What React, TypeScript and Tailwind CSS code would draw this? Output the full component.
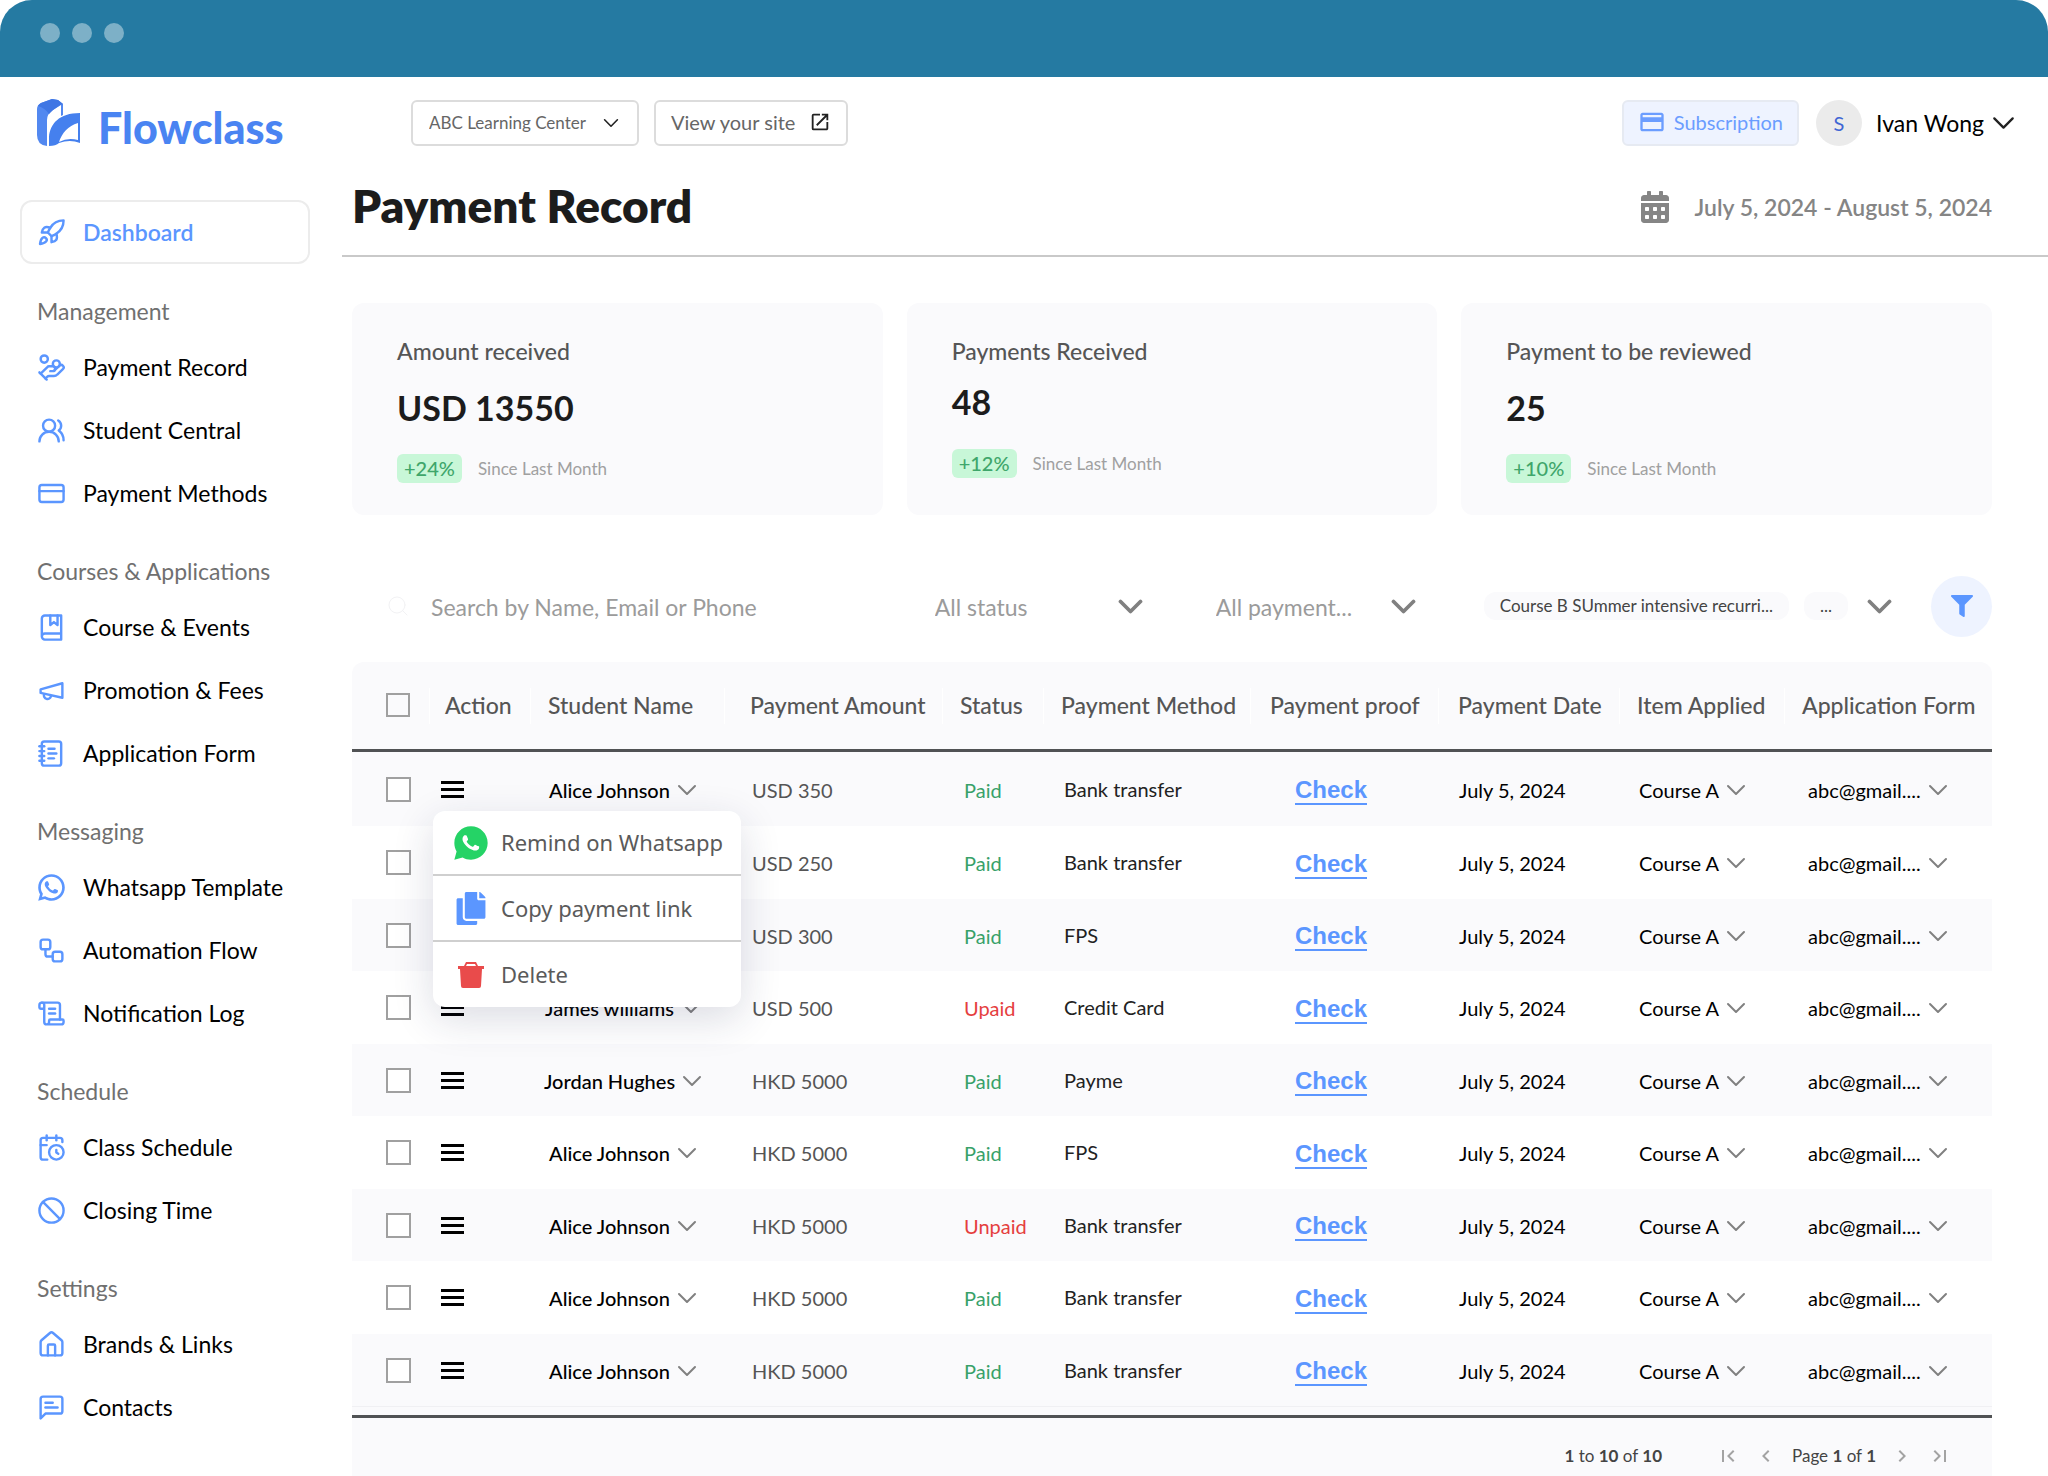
import React, { useState } from "react";
import {
  Ban,
  CalendarClock,
  CreditCard,
  HandCoins,
  House,
  NotebookText,
  Rocket,
  ScrollText,
  Search,
  UsersRound,
  Workflow,
} from "lucide-react";
import { FaCalendarAlt, FaCopy, FaFilter } from "react-icons/fa";
import { MdChevronLeft, MdChevronRight, MdCreditCard, MdFirstPage, MdLastPage, MdOpenInNew } from "react-icons/md";
import { RiWhatsappFill, RiWhatsappLine } from "react-icons/ri";

type IconType = React.ComponentType<{ className?: string }>;

const strokeProps = {
  viewBox: "0 0 24 24",
  fill: "none",
  stroke: "currentColor",
  strokeWidth: 2,
  strokeLinecap: "round" as const,
  strokeLinejoin: "round" as const,
};

const BookIcon: IconType = ({ className }) => (
  <svg {...strokeProps} className={className}>
    <path d="M11 2v8l3-2.5L17 10V2" />
    <path d="M4 19.5v-15A2.5 2.5 0 0 1 6.5 2H20v20H6.5a2.5 2.5 0 0 1 0-5H20" />
  </svg>
);

const MegaphoneIcon: IconType = ({ className }) => (
  <svg {...strokeProps} className={className}>
    <path d="m3 11 18-5v12L3 14v-3z" />
    <path d="M11.6 16.8a3 3 0 1 1-5.8-1.6" />
  </svg>
);

const MessageIcon: IconType = ({ className }) => (
  <svg {...strokeProps} className={className}>
    <path d="M21 15a2 2 0 0 1-2 2H7l-4 4V5a2 2 0 0 1 2-2h14a2 2 0 0 1 2 2z" />
    <path d="M13 8H7" />
    <path d="M17 12H7" />
  </svg>
);

const WhatsappIcon: IconType = ({ className }) => <RiWhatsappLine className={`scale-110 ${className}`} />;

const TrashIcon: IconType = ({ className }) => (
  <svg viewBox="0 0 26 26" className={className} fill="currentColor">
    <path
      fillRule="evenodd"
      d="M8 0h10l2 4h6v3h-2l-1 17a2 2 0 0 1-2 2H5a2 2 0 0 1-2-2L2 7H0V4h6zM9 2 8 4h10l-1-2z"
    />
  </svg>
);

const Chevron = ({ className, thickness = 2 }: { className?: string; thickness?: number }) => (
  <svg viewBox="-1 -1 20 12" className={className} fill="none" stroke="currentColor" strokeWidth={thickness}>
    <path d="m1 1 8 8 8-8" strokeLinecap="round" strokeLinejoin="round" />
  </svg>
);

const Logo = () => (
  <svg viewBox="0 0 43 47" className="h-[47px] w-[43px]" aria-hidden="true">
    <path fill="#5288f0" d="M0 10Q0 6 4 4L15 0l6 1 5 4v11l-2 1V6l-8 5q-6 4-6 10v26Q0 46 0 36z" />
    <path fill="#3f76e4" d="M1 7q1-2 3-3L15 0l6 1 5 4-3 1-7 5-4 4Q8 9 1 7z" />
    <path
      fill="#4580ee"
      fillRule="evenodd"
      d="M12 47V38C13 25 22 14 43 14v30q-10-4-21 0-3 3-10 3zM41 24C31 27 25 34 22 43q9-5 19-2z"
    />
  </svg>
);

const navSections: { title: string; items: { label: string; icon: IconType }[] }[] = [
  {
    title: "Management",
    items: [
      { label: "Payment Record", icon: HandCoins },
      { label: "Student Central", icon: UsersRound },
      { label: "Payment Methods", icon: CreditCard },
    ],
  },
  {
    title: "Courses & Applications",
    items: [
      { label: "Course & Events", icon: BookIcon },
      { label: "Promotion & Fees", icon: MegaphoneIcon },
      { label: "Application Form", icon: NotebookText },
    ],
  },
  {
    title: "Messaging",
    items: [
      { label: "Whatsapp Template", icon: WhatsappIcon },
      { label: "Automation Flow", icon: Workflow },
      { label: "Notification Log", icon: ScrollText },
    ],
  },
  {
    title: "Schedule",
    items: [
      { label: "Class Schedule", icon: CalendarClock },
      { label: "Closing Time", icon: Ban },
    ],
  },
  {
    title: "Settings",
    items: [
      { label: "Brands & Links", icon: House },
      { label: "Contacts", icon: MessageIcon },
    ],
  },
];

const stats = [
  { label: "Amount received", value: "USD 13550", change: "+24%", valueClass: "mb-[21px] leading-[50px]" },
  { label: "Payments Received", value: "48", change: "+12%", valueClass: "mb-7 leading-[38px]" },
  { label: "Payment to be reviewed", value: "25", change: "+10%", valueClass: "mb-[21px] leading-[50px]" },
];

const payments = [
  { name: "Alice Johnson", amount: "USD 350", status: "Paid", method: "Bank transfer" },
  { name: "Alice Johnson", amount: "USD 250", status: "Paid", method: "Bank transfer" },
  { name: "Alice Johnson", amount: "USD 300", status: "Paid", method: "FPS" },
  { name: "James williams", amount: "USD 500", status: "Upaid", method: "Credit Card" },
  { name: "Jordan Hughes", amount: "HKD 5000", status: "Paid", method: "Payme" },
  { name: "Alice Johnson", amount: "HKD 5000", status: "Paid", method: "FPS" },
  { name: "Alice Johnson", amount: "HKD 5000", status: "Unpaid", method: "Bank transfer" },
  { name: "Alice Johnson", amount: "HKD 5000", status: "Paid", method: "Bank transfer" },
  { name: "Alice Johnson", amount: "HKD 5000", status: "Paid", method: "Bank transfer" },
];

const columns = [
  { label: "Action", className: "w-[101px] pl-4" },
  { label: "Student Name", className: "w-[194px] pl-[18px]" },
  { label: "Payment Amount", className: "w-[218px] pl-[26px]" },
  { label: "Status", className: "w-[101px] pl-[18px]" },
  { label: "Payment Method", className: "w-[207px] pl-[18px]" },
  { label: "Payment proof", className: "w-[188px] pl-5" },
  { label: "Payment Date", className: "w-[181px] pl-5" },
  { label: "Item Applied", className: "w-[165px] pl-[18px]" },
  { label: "Application Form", className: "w-[208px] pl-[18px]" },
];

const Sidebar = () => (
  <aside className="w-[342px] shrink-0">
    <a href="#" className="flex items-start gap-[18px] pt-[22px] pl-[37px] text-[#4a84f2]">
      <Logo />
      <span className="pt-[5px] text-[43px] leading-[48px] font-black">Flowclass</span>
    </a>

    <nav className="pl-5">
      <a
        href="#"
        className="mt-12 flex h-16 w-[290px] items-center gap-[17px] rounded-xl border-2 border-[#ececec] pl-[15px] text-[23px] font-semibold text-[#5b96ff]"
      >
        <Rocket className="size-[29px]" />
        Dashboard
      </a>

      <div className="mt-[35px] flex flex-col gap-[34px] pl-[17px]">
        {navSections.map((section) => (
          <section key={section.title}>
            <h2 className="mb-[13px] text-[23px] leading-6 text-[#707070]">{section.title}</h2>
            {section.items.map(({ label, icon: Icon }) => (
              <a key={label} href="#" className="flex h-[63px] items-center gap-[17px] text-[23px] text-black">
                <Icon className="size-[29px] text-[#5b96ff]" />
                {label}
              </a>
            ))}
          </section>
        ))}
      </div>
    </nav>
  </aside>
);

const TopBar = () => (
  <header className="flex items-center pt-[23px] pr-[33px] pl-[69px]">
    <div className="relative">
      <select
        aria-label="School"
        className="h-[46px] w-[228px] appearance-none rounded-md border-2 border-[#dcdcdc] bg-white pl-4 text-[17px] text-[#666]"
      >
        <option>ABC Learning Center</option>
      </select>
      <Chevron className="pointer-events-none absolute top-[18px] right-5 h-[10px] w-4 text-[#222]" />
    </div>
    <a
      href="#"
      className="ml-[15px] flex h-[46px] w-[194px] items-center justify-between rounded-md border-2 border-[#dcdcdc] px-[15px] pb-[2px] text-xl text-[#666]"
    >
      View your site
      <MdOpenInNew className="size-[22px] text-[#222]" />
    </a>

    <button className="ml-auto flex h-[46px] items-center gap-2 rounded-md border-2 border-[#e6eaf2] bg-[#eef3ff] px-[14px] pb-[2px] text-xl text-[#6b9dff]">
      <MdCreditCard className="size-7" />
      Subscription
    </button>
    <button className="ml-[17px] flex items-center text-[23px] text-black">
      <span className="mr-[14px] flex size-[46px] items-center justify-center rounded-full bg-[#ebebeb] text-xl text-[#3f66d4]">
        S
      </span>
      Ivan Wong
      <Chevron className="ml-2 h-[14px] w-[23px] text-[#222]" />
    </button>
  </header>
);

const Stats = () => (
  <div className="mt-[46px] grid grid-cols-3 gap-6">
    {stats.map((stat) => (
      <div key={stat.label} className="h-[212px] rounded-xl bg-[#fafafc] px-[45px] pt-[34px]">
        <p className="text-[23px] leading-7 font-medium text-[#555]">{stat.label}</p>
        <p className={`mt-[18px] text-[34px] font-bold text-[#1c1c1c] ${stat.valueClass}`}>{stat.value}</p>
        <p className="flex items-center gap-4">
          <span className="rounded-md bg-[#c8f7d8] px-[7px] text-xl leading-[29px] font-medium text-[#3fa66b]">
            {stat.change}
          </span>
          <span className="text-[17px] leading-6 text-[#a0a0a0]">Since Last Month</span>
        </p>
      </div>
    ))}
  </div>
);

const Filters = () => (
  <div className="mt-[60px] flex h-[62px] items-center text-[23px] text-[#9b9b9b]">
    <Search className="ml-[34px] size-6 text-[#f2f2f4]" strokeWidth={1} />
    <input
      type="text"
      aria-label="Search payments"
      placeholder="Search by Name, Email or Phone"
      className="ml-[21px] min-w-0 flex-1 bg-transparent pt-[2px] outline-none placeholder:text-[#9b9b9b]"
    />
    <div className="relative mr-[73px] w-[208px]">
      <select aria-label="Status" className="w-full appearance-none bg-transparent pt-[2px]">
        <option>All status</option>
      </select>
      <Chevron thickness={3} className="pointer-events-none absolute top-[11px] right-0 h-[15px] w-[25px] text-[#808080]" />
    </div>
    <div className="relative mr-[68px] w-[200px]">
      <select aria-label="Payment method" className="w-full appearance-none bg-transparent pt-[2px]">
        <option>All payment...</option>
      </select>
      <Chevron thickness={3} className="pointer-events-none absolute top-[11px] right-0 h-[15px] w-[25px] text-[#808080]" />
    </div>
    <button className="flex items-center text-[17px] leading-7 text-[#444]">
      <span className="mr-[15px] rounded-xl bg-[#fafafc] px-4">Course B SUmmer intensive recurri...</span>
      <span className="mr-[19px] rounded-xl bg-[#fafafc] px-4">...</span>
      <Chevron thickness={3} className="h-[15px] w-[25px] text-[#808080]" />
    </button>
    <button
      aria-label="Filter"
      className="ml-[39px] flex size-[61px] items-center justify-center rounded-full bg-[#eef3ff] text-[#5b96ff]"
    >
      <FaFilter className="size-[22px]" />
    </button>
  </div>
);

const ActionMenu = () => (
  <div className="absolute top-[59px] left-1 z-10 w-[308px] rounded-xl bg-white font-['Noto_Sans',sans-serif] text-[22px] text-[#5a5a5a] shadow-[0_12px_40px_rgba(30,40,80,0.16)]">
    <button className="flex h-[65px] w-full items-center border-b-2 border-[#cfcfcf] pl-[18px]">
      <RiWhatsappFill className="mr-[10px] size-10 text-[#25d366]" />
      Remind on Whatsapp
    </button>
    <button className="flex h-[66px] w-full items-center border-b-2 border-[#cfcfcf] pl-[23px]">
      <FaCopy className="mr-[15px] h-[33px] w-[30px] text-[#5b96ff]" />
      Copy payment link
    </button>
    <button className="flex h-[65px] w-full items-center pl-[25px]">
      <TrashIcon className="mr-[17px] size-[26px] text-[#e94b4b]" />
      Delete
    </button>
  </div>
);

const PaymentTable = () => {
  const [openRow, setOpenRow] = useState<number | null>(0);

  return (
    <table className="mt-[25px] w-full table-fixed border-separate border-spacing-0 text-left text-xl">
      <thead>
        <tr className="h-[90px] text-[23px] text-[#555]">
          <th className="w-[77px] rounded-tl-xl border-b-3 border-[#505254] bg-[#fafafc] pb-px pl-[34px]">
            <input type="checkbox" aria-label="Select all" className="block size-6 appearance-none border-2 border-[#a0a0a0]" />
          </th>
          {columns.map((col) => (
            <th
              key={col.label}
              className={`relative border-b-3 border-[#505254] bg-[#fafafc] pb-px font-medium whitespace-nowrap before:absolute before:top-[26px] before:left-0 before:h-9 before:w-px before:bg-white last:rounded-tr-xl ${col.className}`}
            >
              {col.label}
            </th>
          ))}
        </tr>
      </thead>
      <tbody>
        {payments.map((row, i) => (
          <tr key={i} className={`whitespace-nowrap text-black odd:bg-[#fafafc] ${i === 0 ? "h-[74px]" : "odd:h-[72px] even:h-[73px]"}`}>
            <td className="pl-[34px]">
              <input
                type="checkbox"
                aria-label={`Select payment ${i + 1}`}
                className="block size-[25px] appearance-none border-2 border-[#a0a0a0] bg-white"
              />
            </td>
            <td className="relative pl-3">
              <button
                aria-label="Row actions"
                className="flex flex-col gap-1"
                onClick={() => setOpenRow(openRow === i ? null : i)}
              >
                <span className="h-[3px] w-[23px] bg-black" />
                <span className="h-[3px] w-[23px] bg-black" />
                <span className="h-[3px] w-[23px] bg-black" />
              </button>
              {openRow === i && <ActionMenu />}
            </td>
            <td className="pt-px">
              <button className="flex w-full items-center justify-center gap-[7px] pr-2 font-medium">
                {row.name}
                <Chevron className="h-3 w-5 text-[#808080]" />
              </button>
            </td>
            <td className="pt-px pl-7 text-[#555]">{row.amount}</td>
            <td className={`pt-px pl-[22px] ${row.status === "Paid" ? "text-[#38a169]" : "text-[#e53e3e]"}`}>
              {row.status}
            </td>
            <td className="pb-px pl-[21px] text-[#222]">{row.method}</td>
            <td className="pt-[3px] pl-[45px]">
              <a
                href="#"
                className="inline-block border-b-2 border-[#5b96ff] font-['Liberation_Sans',Arial,sans-serif] text-2xl leading-[26px] font-bold text-[#5b96ff]"
              >
                Check
              </a>
            </td>
            <td className="pt-px pl-[21px]">July 5, 2024</td>
            <td className="pt-px pl-5">
              <button className="flex items-center gap-[7px]">
                Course A
                <Chevron className="h-3 w-5 text-[#808080]" />
              </button>
            </td>
            <td className="pt-px pl-6">
              <button className="flex items-center gap-[7px]">
                abc@gmail....
                <Chevron className="h-3 w-5 text-[#808080]" />
              </button>
            </td>
          </tr>
        ))}
      </tbody>
    </table>
  );
};

const Pagination = () => (
  <footer className="border-t border-[#f0f0f3] bg-[#fafafc] pt-2">
    <div className="flex h-[62px] items-center justify-end border-t-3 border-[#505254] pt-[17px] pr-10 text-[17px] text-[#444]">
      <p className="mr-[54px]">
        <b>1</b> to <b>10</b> of <b>10</b>
      </p>
      <div className="flex items-center text-2xl text-[#a3a3a3]">
        <button aria-label="First page">
          <MdFirstPage />
        </button>
        <button aria-label="Previous page" className="ml-[14px]">
          <MdChevronLeft />
        </button>
        <p className="mx-[14px] text-[17px] text-[#444]">
          Page <b>1</b> of <b>1</b>
        </p>
        <button aria-label="Next page">
          <MdChevronRight />
        </button>
        <button aria-label="Last page" className="ml-[14px]">
          <MdLastPage />
        </button>
      </div>
    </div>
  </footer>
);

export default function App() {
  return (
    <div className="min-h-screen overflow-hidden rounded-[32px] bg-white font-['Lato',sans-serif]">
      <div className="flex h-[77px] items-start gap-3 bg-[#257aa2] pt-[23px] pl-10">
        <span className="size-5 rounded-full bg-[#7db0c7]" />
        <span className="size-5 rounded-full bg-[#7db0c7]" />
        <span className="size-5 rounded-full bg-[#7db0c7]" />
      </div>

      <div className="flex">
        <Sidebar />
        <main className="min-w-0 flex-1">
          <TopBar />
          <div className="mt-8 flex items-center border-b-2 border-[#c9c9c9] pr-14 pb-[21px] pl-[10px]">
            <h1 className="text-[46px] leading-[56px] font-extrabold text-[#1c1c1c]">Payment Record</h1>
            <button className="ml-auto flex items-center gap-6 pt-[2px] text-[23px] font-semibold text-[#858585]">
              <FaCalendarAlt className="size-8" />
              July 5, 2024 - August 5, 2024
            </button>
          </div>
          <div className="pr-14 pl-[10px]">
            <Stats />
            <Filters />
            <PaymentTable />
            <Pagination />
          </div>
        </main>
      </div>
    </div>
  );
}
